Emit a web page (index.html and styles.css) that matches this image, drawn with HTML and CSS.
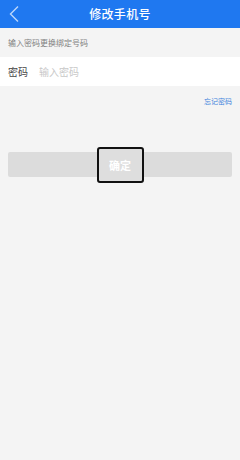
FILE: index.html
```html
<!DOCTYPE html>
<html lang="zh">
<head>
<meta charset="utf-8">
<link rel="stylesheet" href="styles.css">
</head>
<body>
<div class="page">
  <header class="topbar">
    <span class="back">
      <svg width="12" height="18" viewBox="0 0 12 18"><path d="M10 1.5 L2.5 9 L10 16.5" fill="none" stroke="#bcd6fb" stroke-width="1.4"/></svg>
    </span>
    <h1 class="title">修改手机号</h1>
  </header>
  <div class="hint">输入密码更换绑定号码</div>
  <div class="field">
    <span class="label">密码</span>
    <span class="placeholder">输入密码</span>
  </div>
  <div class="forgot-row"><span class="forgot">忘记密码</span></div>
  <div class="btn-wrap">
    <div class="btn"><span class="btn-text">确定</span></div>
  </div>
</div>
</body>
</html>
```

FILE: styles.css
```css
* { box-sizing: border-box; margin: 0; padding: 0; }
html, body { width: 240px; height: 460px; }
body { background: #f4f4f4; font-family: "Noto Sans CJK SC", "Noto Sans", sans-serif; overflow: hidden; }
.page { display: flex; flex-direction: column; }
.topbar { height: 28px; background: #1f78f0; display: flex; align-items: center; justify-content: center; position: relative; }
.back { position: absolute; left: 8px; top: 5px; display: flex; }
.title { color: #ffffff; font-size: 12px; font-weight: 500; letter-spacing: 0.3px; line-height: 1; }
.hint { height: 29px; padding-left: 8px; display: flex; align-items: center; font-size: 8px; color: #808080; }
.field { height: 29px; background: #ffffff; display: flex; align-items: center; padding-left: 8px; }
.label { font-size: 10px; color: #444444; width: 31px; }
.placeholder { font-size: 10px; color: #c8c8c8; }
.forgot-row { display: flex; justify-content: flex-end; padding: 10px 8px 0 0; height: 32px; }
.forgot { font-size: 7px; color: #3c82dc; }
.btn-wrap { padding: 34px 8px 0 8px; }
.btn { height: 25px; background: #dcdcdc; border-radius: 2px; display: flex; align-items: center; justify-content: center; position: relative; }
.btn-text { width: 47px; height: 36px; border: 2px solid #111111; border-radius: 3px; display: flex; align-items: center; justify-content: center; color: #ffffff; font-size: 11px; font-weight: 700; background: #dedede; flex-shrink: 0; }
```
